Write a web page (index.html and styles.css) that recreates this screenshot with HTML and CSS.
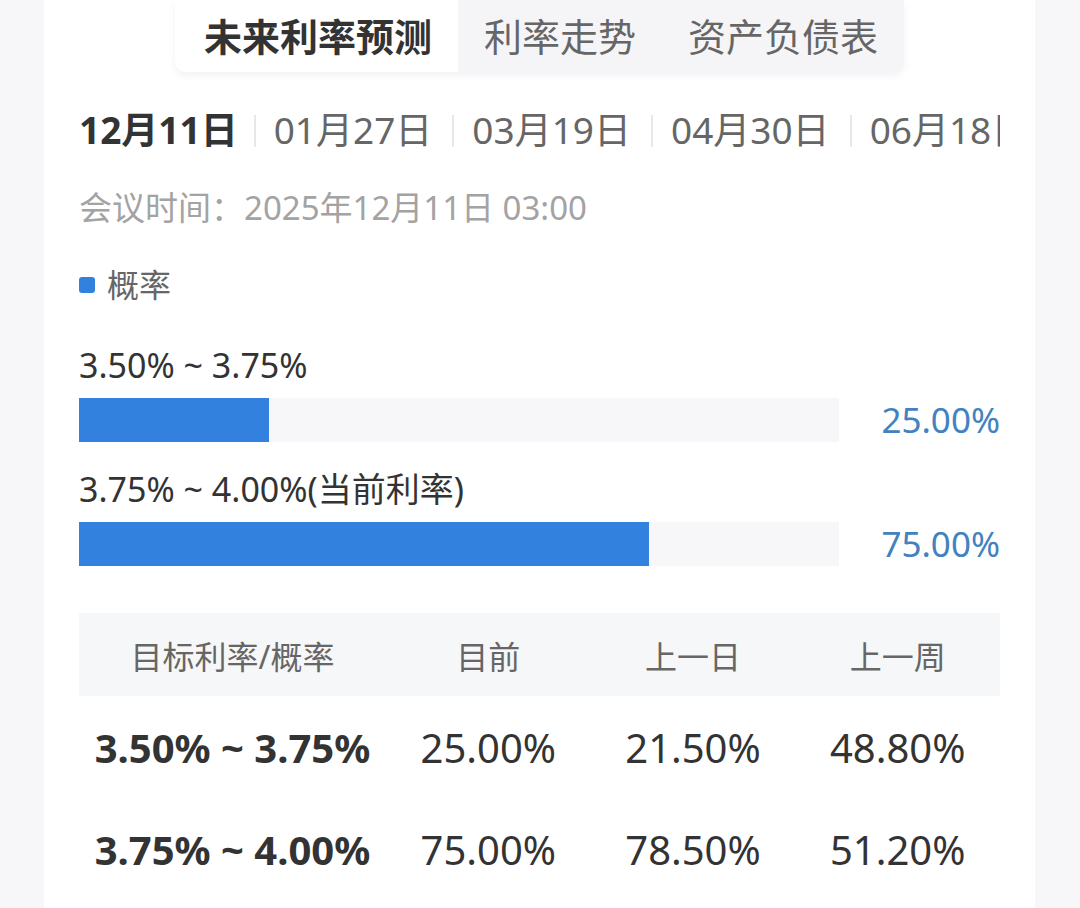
FILE: index.html
```html
<!DOCTYPE html>
<html lang="zh-CN">
<head>
    <meta charset="UTF-8">
    <meta name="viewport" content="width=device-width, initial-scale=1.0">
    <title>未来利率预测</title>
    <link rel="stylesheet" href="styles.css">
</head>
<body>
    <div class="card">
        <div class="tabs">
            <div class="tab active">未来利率预测</div>
            <div class="tab">利率走势</div>
            <div class="tab">资产负债表</div>
        </div>

        <div class="dates">
            <div class="date active">12月11日</div>
            <div class="date">01月27日</div>
            <div class="date">03月19日</div>
            <div class="date">04月30日</div>
            <div class="date">06月18日</div>
            <div class="date">07月30日</div>
        </div>

        <p class="meeting">会议时间：2025年12月11日 03:00</p>

        <div class="legend">
            <span class="legend-dot"></span>
            <span>概率</span>
        </div>

        <!-- 概率条 -->
        <div class="prob">
            <p class="prob-label">3.50% ~ 3.75%</p>
            <div class="prob-row">
                <div class="track"><div class="fill" style="width: 25%"></div></div>
                <span class="prob-value">25.00%</span>
            </div>
        </div>
        <div class="prob">
            <p class="prob-label">3.75% ~ 4.00%(当前利率)</p>
            <div class="prob-row">
                <div class="track"><div class="fill" style="width: 75%"></div></div>
                <span class="prob-value">75.00%</span>
            </div>
        </div>

        <!-- 概率表 -->
        <div class="table">
            <div class="table-row table-head">
                <div>目标利率/概率</div>
                <div>目前</div>
                <div>上一日</div>
                <div>上一周</div>
            </div>
            <div class="table-row">
                <div class="range">3.50% ~ 3.75%</div>
                <div>25.00%</div>
                <div>21.50%</div>
                <div>48.80%</div>
            </div>
            <div class="table-row">
                <div class="range">3.75% ~ 4.00%</div>
                <div>75.00%</div>
                <div>78.50%</div>
                <div>51.20%</div>
            </div>
        </div>

        <p class="note">注：以上数据根据联邦基金期货价格计算，仅供参考，不构成投资建议。</p>
    </div>
</body>
</html>
```

FILE: styles.css
```css
body {
    margin: 0;
    padding: 0;
    background-color: #f7f7f9;
    font-family: "Noto Sans", "Noto Sans CJK SC", sans-serif;
    color: #333;
}

p {
    margin: 0;
}

.card {
    margin: 0 45px 0 44px;
    padding: 0 35px;
    min-height: 908px;
    background-color: #fff;
    overflow: hidden;
}

/* 顶部标签 */
.tabs {
    display: flex;
    width: max-content;
    margin: 0 auto;
    background-color: #f5f5f7;
    border-radius: 0 0 10px 10px;
    box-shadow: 0 4px 8px rgba(0, 0, 0, 0.05);
    overflow: hidden;
}

.tab {
    height: 72px;
    line-height: 72px;
    padding: 0 26px;
    font-size: 38px;
    color: #666;
}

.tab.active {
    padding: 0 26px 0 29px;
    background-color: #fff;
    color: #333;
    font-weight: bold;
}

/* 会议日期 */
.dates {
    display: flex;
    margin-top: 33px;
    white-space: nowrap;
    overflow: hidden;
}

.date {
    position: relative;
    padding: 0 20px;
    font-size: 37px;
    line-height: 50px;
    color: #666;
}

.date:first-child {
    padding-left: 0;
}

.date + .date::before {
    content: "";
    position: absolute;
    left: 0;
    top: 10px;
    width: 2px;
    height: 32px;
    background-color: #e8e8e8;
}

.date.active {
    padding-right: 16px;
    color: #333;
    font-weight: bold;
}

.meeting {
    margin-top: 31px;
    font-size: 33px;
    line-height: 44px;
    color: #a3a3a3;
}

.legend {
    display: flex;
    align-items: center;
    gap: 12px;
    margin-top: 33px;
    font-size: 32px;
    line-height: 44px;
    color: #666;
}

.legend-dot {
    width: 16px;
    height: 16px;
    border-radius: 3px;
    background-color: #3381de;
}

/* 概率条 */
.prob {
    margin-top: 36px;
}

.prob + .prob {
    margin-top: 24px;
}

.prob-label {
    font-size: 34px;
    line-height: 44px;
    color: #333;
}

.prob-row {
    display: flex;
    align-items: center;
    margin-top: 9px;
}

.track {
    flex: 1;
    height: 44px;
    background-color: #f7f7f9;
}

.fill {
    height: 100%;
    background-color: #3381de;
}

.prob-value {
    width: 161px;
    text-align: right;
    font-size: 35px;
    color: #4282c0;
}

/* 概率表 */
.table {
    margin-top: 46px;
}

.table-row {
    display: grid;
    grid-template-columns: 1.5fr 1fr 1fr 1fr;
    align-items: center;
    height: 102px;
    text-align: center;
    font-size: 40px;
    color: #333;
}

.table-head {
    height: 83px;
    background-color: #f6f7f9;
    font-size: 32px;
    color: #666;
}

.range {
    font-weight: bold;
}

.note {
    margin-top: 6px;
    font-size: 28px;
    line-height: 40px;
    color: #bbb;
}
```
